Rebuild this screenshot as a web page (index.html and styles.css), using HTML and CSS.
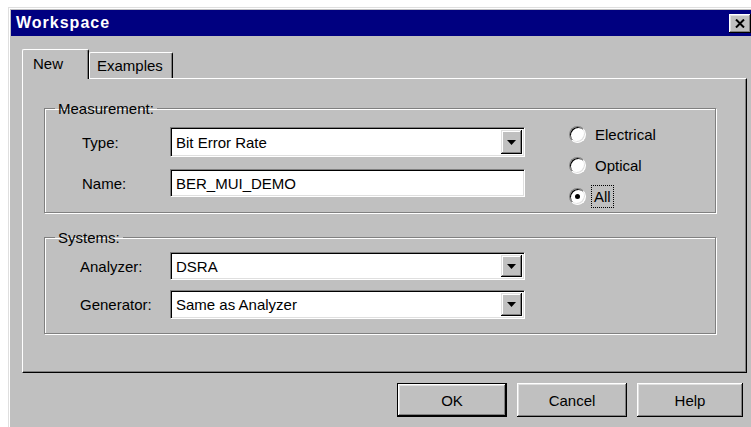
FILE: index.html
```html
<!DOCTYPE html>
<html lang="en">
<head>
<meta charset="utf-8">
<title>Workspace</title>
<link rel="stylesheet" href="styles.css">
</head>
<body>
<div class="dialog">
  <div class="titlebar">
    <span class="title">Workspace</span>
    <span class="close" aria-label="Close">
      <svg width="10" height="9" viewBox="0 0 10 9"><path d="M1 0.5 L9 8.5 M9 0.5 L1 8.5" stroke="#000" stroke-width="2" fill="none"/></svg>
    </span>
  </div>
  <div class="body">
    <div class="tabs">
      <div class="tab tab-active">New</div>
      <div class="tab">Examples</div>
    </div>
    <div class="panel">
      <fieldset class="group group-measurement">
        <legend>Measurement:</legend>
        <div class="group-row">
          <div class="form">
            <label class="field-label">Type:</label>
            <div class="combo"><span class="combo-value">Bit Error Rate</span><span class="drop"><svg width="9" height="5" viewBox="0 0 9 5"><polygon points="0,0 9,0 4.5,5" fill="#000"/></svg></span></div>
            <label class="field-label">Name:</label>
            <div class="textbox"><span class="combo-value">BER_MUI_DEMO</span></div>
          </div>
          <div class="radios">
            <div class="radio"><span class="radio-dot"></span><span class="radio-text">Electrical</span></div>
            <div class="radio"><span class="radio-dot"></span><span class="radio-text">Optical</span></div>
            <div class="radio"><span class="radio-dot checked"></span><span class="radio-text focused">All</span></div>
          </div>
        </div>
      </fieldset>
      <fieldset class="group group-systems">
        <legend>Systems:</legend>
        <div class="form form-systems">
          <label class="field-label">Analyzer:</label>
          <div class="combo"><span class="combo-value">DSRA</span><span class="drop"><svg width="9" height="5" viewBox="0 0 9 5"><polygon points="0,0 9,0 4.5,5" fill="#000"/></svg></span></div>
          <label class="field-label">Generator:</label>
          <div class="combo"><span class="combo-value">Same as Analyzer</span><span class="drop"><svg width="9" height="5" viewBox="0 0 9 5"><polygon points="0,0 9,0 4.5,5" fill="#000"/></svg></span></div>
        </div>
      </fieldset>
    </div>
    <div class="buttons">
      <div class="btn btn-default">OK</div>
      <div class="btn">Cancel</div>
      <div class="btn">Help</div>
    </div>
  </div>
</div>
</body>
</html>
```
FILE: styles.css
```css
html, body {
  margin: 0;
  padding: 0;
  background: #fff;
  overflow: hidden;
}

body {
  font-family: "Liberation Sans", Arial, sans-serif;
  font-size: 15px;
  color: #000;
}

/* window frame */
.dialog {
  margin: 7px 0 0 8px;
  width: 748px;
  height: 430px;
  box-sizing: border-box;
  background: #c0c0c0;
  border-top: 1px solid #dfdfdf;
  border-left: 1px solid #dfdfdf;
  box-shadow: inset 1px 1px #fff;
  padding: 2px 2px 0 2px;
}

.titlebar {
  height: 26px;
  background: #000080;
  display: flex;
  align-items: center;
  justify-content: space-between;
  padding: 0 0 0 5px;
}

.title {
  color: #fff;
  font-weight: bold;
  font-size: 16px;
  letter-spacing: 1px;
}

.close {
  width: 22px;
  height: 19px;
  background: #c0c0c0;
  box-sizing: border-box;
  box-shadow: inset -1px -1px #000, inset 1px 1px #fff, inset -2px -2px #808080, inset 2px 2px #dfdfdf;
  display: flex;
  align-items: center;
  justify-content: center;
  margin-right: 3px;
}

.body {
  padding: 13px 0 0 11px;
}

/* tab strip */
.tabs {
  display: flex;
  align-items: flex-end;
  height: 29px;
  position: relative;
  z-index: 1;
}

.tab {
  height: 26px;
  box-sizing: border-box;
  border-top: 1px solid #fff;
  border-left: 1px solid #fff;
  border-right: 1px solid #000;
  box-shadow: inset -1px 0 #808080;
  border-radius: 2px 2px 0 0;
  padding: 3px 9px 0 7px;
  line-height: 20px;
  background: #c0c0c0;
}

.tab-active {
  height: 30px;
  margin-bottom: -1px;
  padding: 4px 20px 0 10px;
  width: 67px;
}

.panel {
  width: 725px;
  height: 295px;
  box-sizing: border-box;
  border-top: 1px solid #fff;
  border-left: 1px solid #fff;
  border-right: 1px solid #000;
  border-bottom: 1px solid #000;
  box-shadow: inset -1px -1px #808080;
  padding: 21px 0 0 21px;
}

/* etched group boxes */
.group {
  margin: 0;
  width: 672px;
  box-sizing: border-box;
  border: 1px solid #808080;
  box-shadow: inset 1px 1px #fff, 1px 1px #fff;
  padding: 0;
  min-inline-size: 0;
}

.group legend {
  margin-left: 10px;
  padding: 0 3px 0 3px;
  line-height: 17px;
}

.group-measurement {
  height: 113px;
}

.group-systems {
  margin-top: 16px;
  height: 105px;
}

.group-row {
  display: flex;
  padding: 10px 0 0 37px;
}

.form {
  display: grid;
  grid-template-columns: 88px 355px;
  grid-template-rows: 30px 28px;
  row-gap: 12px;
  align-items: center;
}

.form-systems {
  padding: 6px 0 0 35px;
  grid-template-columns: 90px 355px;
  grid-template-rows: 28px 29px;
  row-gap: 10px;
}

.field-label {
  line-height: 17px;
}

.combo, .textbox {
  height: 100%;
  display: flex;
  box-sizing: border-box;
  background: #fff;
  border-style: solid;
  border-width: 1px;
  border-color: #808080 #fff #fff #808080;
  box-shadow: inset 1px 1px #000, inset -1px -1px #dfdfdf;
  padding: 2px;
}

.combo-value {
  flex: 1;
  align-self: center;
  padding-left: 3px;
}

.drop {
  width: 21px;
  background: #c0c0c0;
  box-shadow: inset -1px -1px #000, inset 1px 1px #dfdfdf, inset -2px -2px #808080, inset 2px 2px #fff;
  display: flex;
  align-items: center;
  justify-content: center;
}

/* option buttons */
.radios {
  display: flex;
  flex-direction: column;
  gap: 14px;
  margin: -1px 0 0 44px;
}

.radio {
  display: flex;
  align-items: center;
  height: 17px;
}

.radio-dot {
  width: 17px;
  height: 17px;
  box-sizing: border-box;
  border-radius: 50%;
  background: #fff;
  border: 1px solid;
  border-color: #808080 #fff #fff #808080;
  box-shadow: inset 1px 1px #000, inset -1px -1px #dfdfdf;
  margin-right: 9px;
  display: flex;
  align-items: center;
  justify-content: center;
}

.radio-dot.checked::after {
  content: "";
  width: 5px;
  height: 5px;
  border-radius: 50%;
  background: #000;
}

.radio-text.focused {
  outline: 1px dotted #000;
  outline-offset: 2px;
  margin-left: -1px;
}

/* command buttons */
.buttons {
  width: 725px;
  display: flex;
  justify-content: flex-end;
  gap: 10px;
  padding-right: 4px;
  box-sizing: border-box;
  margin-top: 10px;
}

.btn {
  width: 110px;
  height: 34px;
  box-sizing: border-box;
  display: flex;
  align-items: center;
  justify-content: center;
  box-shadow: inset -1px -1px #000, inset 1px 1px #fff, inset -2px -2px #808080, inset 2px 2px #dfdfdf;
}

.btn:last-child {
  width: 106px;
}

.btn-default {
  border: 1px solid #000;
}
```
